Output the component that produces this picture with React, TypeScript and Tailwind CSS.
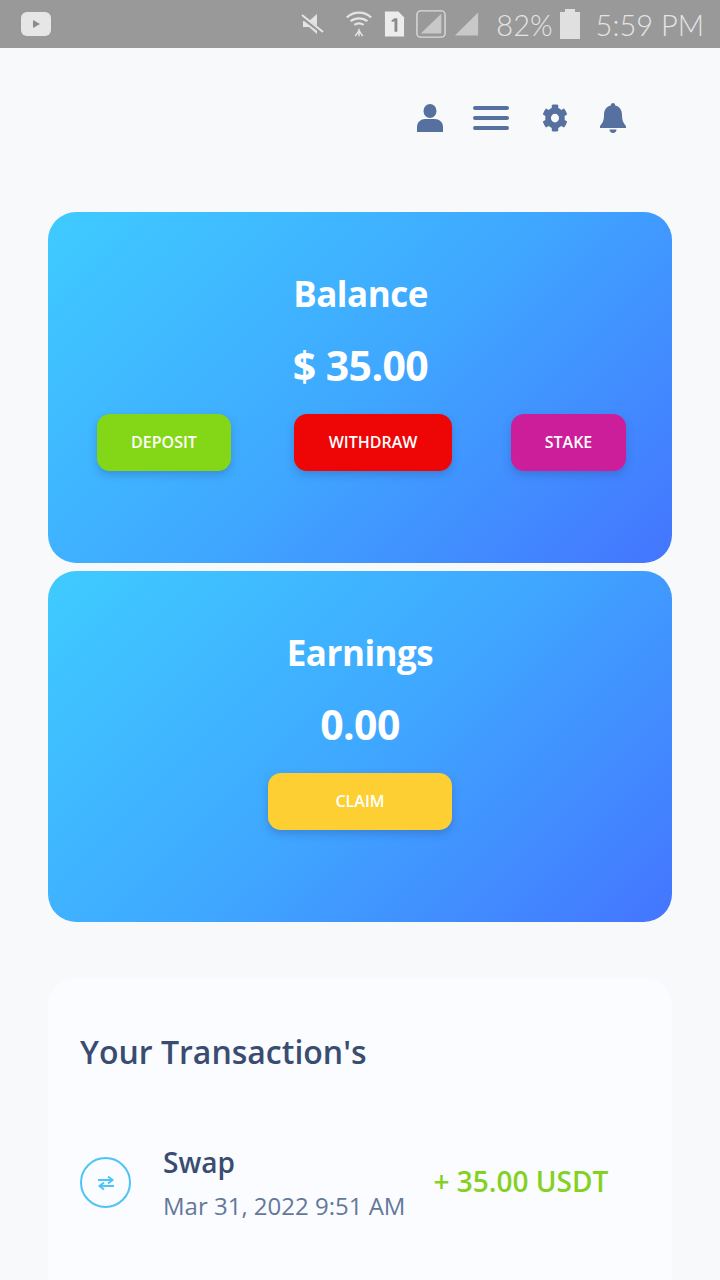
const cardGradient = 'bg-[linear-gradient(135deg,#3fcbff_0%,#3fa8ff_50%,#4475ff_100%)]'

function StatusBar() {
  return (
    <div className="flex h-12 items-center bg-[#999999] pl-[21px] pr-[16px] text-[#e4e4e4]">
      <svg width="30" height="24" viewBox="0 0 30 24">
        <rect x="0" y="0" width="30" height="24" rx="6" fill="#e6e6e6" />
        <path d="M12 8l7 4-7 4z" fill="#8a8a8a" />
      </svg>
      <div className="ml-auto flex items-center">
        <svg width="24" height="24" viewBox="0 0 24 24" fill="#e4e4e4">
          <path d="M3 9h6l8-7v20l-8-7H3z" />
          <path d="M2 5l21 16" stroke="#999" strokeWidth="4" />
          <path d="M2 3l21 17" stroke="#e4e4e4" strokeWidth="2" />
        </svg>
        <svg className="ml-[21px]" width="28" height="30" viewBox="0 0 30 30" fill="none" stroke="#e4e4e4" strokeWidth="2.4">
          <path d="M2 8c7-7 19-7 26 0" />
          <path d="M6 12c5-4 13-4 18 0" />
          <path d="M10 16c3-2 7-2 10 0" />
          <path d="M15 20v8M11 28l4-6 4 6" strokeWidth="1.6" />
        </svg>
        <svg className="ml-[11px]" width="21" height="28" viewBox="0 0 22 28">
          <path d="M1 1h14l6 6v20H1z" fill="#ececec" />
          <path d="M11 8l-3 2v2l3-1v11h3V8z" fill="#8a8a8a" />
        </svg>
        <svg className="ml-[11px]" width="30" height="30" viewBox="0 0 32 30">
          <rect x="1" y="1" width="30" height="28" rx="4" fill="none" stroke="#dcdcdc" strokeWidth="1.5" />
          <path d="M5 25L27 4v21z" fill="#c8c8c8" />
        </svg>
        <svg className="ml-[8px]" width="25" height="28" viewBox="0 0 28 28">
          <path d="M1 27L27 1v26z" fill="#c8c8c8" />
        </svg>
        <span className="ml-[17px] font-['Lato'] text-[29px] font-light leading-none">82%</span>
        <svg className="ml-[7px]" width="20" height="30" viewBox="0 0 20 30">
          <path d="M5 0h10v3h5v27H0V3h5z" fill="#e0e0e0" />
        </svg>
        <span className="ml-[16px] font-['Lato'] text-[29px] font-light leading-none">5:59 PM</span>
      </div>
    </div>
  )
}

function Header() {
  return (
    <div className="flex h-[164px] items-start pt-[55px] text-[#56719f]">
      <div className="ml-[417px] flex items-center">
        <svg width="26" height="28" viewBox="0 0 26 28" fill="currentColor">
          <ellipse cx="13" cy="7" rx="6.5" ry="7" />
          <path d="M0 28v-5c0-5 4-8 8-8h10c4 0 8 3 8 8v5z" />
        </svg>
        <div className="ml-[30px] flex w-[36px] flex-col gap-[6px]">
          <span className="block h-1 rounded-sm bg-[#56719f]" />
          <span className="block h-1 rounded-sm bg-[#56719f]" />
          <span className="block h-1 rounded-sm bg-[#56719f]" />
        </div>
        <svg className="ml-[33px]" width="26" height="28" viewBox="0 0 512 512" fill="currentColor" preserveAspectRatio="none">
          <path d="M487.4 315.7l-42.6-24.6c4.3-23.2 4.3-47 0-70.2l42.6-24.6c4.9-2.8 7.1-8.6 5.5-14-11.1-35.6-30-67.8-54.7-94.6-3.8-4.1-10-5.1-14.8-2.3L380.8 110c-17.9-15.4-38.5-27.3-60.8-35.1V25.8c0-5.6-3.9-10.5-9.4-11.7-36.7-8.2-74.3-7.8-109.2 0-5.5 1.2-9.4 6.1-9.4 11.7V75c-22.2 7.9-42.8 19.8-60.8 35.1L88.7 85.5c-4.9-2.8-11-1.9-14.8 2.3-24.7 26.7-43.6 58.9-54.7 94.6-1.7 5.4.6 11.2 5.5 14L67.3 221c-4.3 23.2-4.3 47 0 70.2l-42.6 24.6c-4.9 2.8-7.1 8.6-5.5 14 11.1 35.6 30 67.8 54.7 94.6 3.8 4.1 10 5.1 14.8 2.3l42.6-24.6c17.9 15.4 38.5 27.3 60.8 35.1v49.2c0 5.6 3.9 10.5 9.4 11.7 36.7 8.2 74.3 7.8 109.2 0 5.5-1.2 9.4-6.1 9.4-11.7v-49.2c22.2-7.9 42.8-19.8 60.8-35.1l42.6 24.6c4.9 2.8 11 1.9 14.8-2.3 24.7-26.7 43.6-58.9 54.7-94.6 1.5-5.5-.7-11.3-5.6-14.1zM256 336c-44.1 0-80-35.9-80-80s35.9-80 80-80 80 35.9 80 80-35.9 80-80 80z" />
        </svg>
        <svg className="ml-[32px]" width="26" height="30" viewBox="0 0 26 30" fill="currentColor">
          <path d="M13 0c1.400 0 2.200 1 2.200 2.600C20 3.600 22 7.600 22 12c0 6 1.600 8 4 11v2H0v-2c2.400-3 4-5 4-11 0-4.400 2-8.400 6.800-9.400C10.800 1 11.600 0 13 0z" />
          <path d="M9.500 26.500h7c0 2-1.500 3.500-3.500 3.500s-3.500-1.500-3.500-3.500z" />
        </svg>
      </div>
    </div>
  )
}

function ActionButton({ label, className }: { label: string; className: string }) {
  return (
    <button className={`flex h-[57px] items-center justify-center rounded-[13px] pb-[2px] text-[16px] font-semibold leading-none text-white shadow-[0_4px_8px_rgba(40,60,120,0.28)] ${className}`}>
      {label}
    </button>
  )
}

function BalanceCard() {
  return (
    <div className={`h-[351px] rounded-[28px] pt-[61px] ${cardGradient}`}>
      <div className="pl-[1px] text-center text-[35px] font-bold leading-[42px] tracking-[-0.5px] text-white">Balance</div>
      <div className="mt-[29px] pl-[1px] text-center text-[41px] font-bold leading-[42px] tracking-[-0.6px] text-white">$ 35.00</div>
      <div className="mt-[28px] flex pl-[49px]">
        <ActionButton label="DEPOSIT" className="w-[134px] bg-[#84d716]" />
        <ActionButton label="WITHDRAW" className="ml-[63px] w-[158px] bg-[#ee0505]" />
        <ActionButton label="STAKE" className="ml-[59px] w-[115px] bg-[#cc1e9a]" />
      </div>
    </div>
  )
}

function EarningsCard() {
  return (
    <div className={`mt-2 h-[351px] rounded-[28px] pt-[61px] ${cardGradient}`}>
      <div className="text-center text-[35px] font-bold leading-[42px] tracking-[-0.5px] text-white">Earnings</div>
      <div className="mt-[29px] text-center text-[41px] font-bold leading-[42px] tracking-[-0.6px] text-white">0.00</div>
      <div className="mt-[28px] flex justify-center">
        <ActionButton label="CLAIM" className="w-[184px] bg-[#fdcf33]" />
      </div>
    </div>
  )
}

function Transactions() {
  return (
    <div className="mt-14 h-[400px] rounded-[28px] bg-[#fbfcff] px-8 pt-[50px]">
      <h2 className="text-[32px] font-semibold leading-[48px] text-[#3a4d70]">Your Transaction's</h2>
      <div className="mt-[67px] flex">
        <div className="mt-[14px] flex h-[51px] w-[51px] items-center justify-center rounded-full border-2 border-[#4cc4f5] text-[#4cc4f5]">
          <svg width="18" height="16" viewBox="0 0 18 16" fill="none" stroke="currentColor" strokeWidth="2">
            <path d="M1 5h14M11 1.500L15.500 5 11 8.500" />
            <path d="M17 11H3M7 7.500L2.500 11 7 14.500" />
          </svg>
        </div>
        <div className="ml-8">
          <div className="text-[28px] font-semibold leading-[38px] text-[#3a4d70]">Swap</div>
          <div className="mt-[9px] text-[24px] leading-[32px] text-[#64789a]">Mar 31, 2022 9:51 AM</div>
        </div>
        <div className="ml-7 mt-[19px] text-[28px] font-semibold leading-[38px] text-[#84d11f]">+ 35.00 USDT</div>
      </div>
    </div>
  )
}

export default function App() {
  return (
    <div className="h-[1280px] overflow-hidden bg-[#f8f9fb] font-['Open_Sans',sans-serif]">
      <StatusBar />
      <Header />
      <div className="px-12">
        <BalanceCard />
        <EarningsCard />
        <Transactions />
      </div>
    </div>
  )
}
